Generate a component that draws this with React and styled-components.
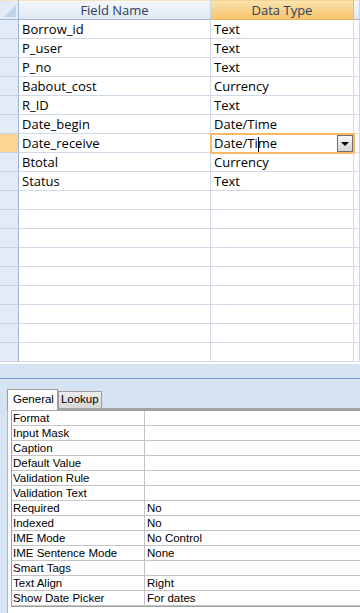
import React from "react";
import styled, { createGlobalStyle } from "styled-components";

const Global = createGlobalStyle`
  html, body { margin: 0; padding: 0; background: #ffffff; }
  body { width: 360px; height: 613px; overflow: hidden; }
  * { box-sizing: border-box; }
`;

const Page = styled.div`
  width: 360px;
  height: 613px;
  display: flex;
  flex-direction: column;
  font-family: "Open Sans", "Liberation Sans", sans-serif;
  background: #ffffff;
`;

const Grid = styled.div`
  height: 364px;
  flex: none;
  display: flex;
  flex-direction: column;
  background: #ffffff;
`;

const Row = styled.div`
  display: grid;
  grid-template-columns: 19px 192px 143px 1fr;
  height: ${(p) => (p.$header ? "20px" : "19px")};
  flex: none;
`;

const Corner = styled.div`
  position: relative;
  background: #e3ebf6;
  border-top: 1px solid #f2e4c2;
  border-right: 1px solid #9fb6d3;
  border-bottom: 1px solid #9fb6d3;
  &::after {
    content: "";
    position: absolute;
    right: 2px;
    bottom: 2px;
    width: 0;
    height: 0;
    border-left: 12px solid transparent;
    border-bottom: 12px solid #c3d2e7;
  }
`;

const HeadCell = styled.div`
  background: ${(p) =>
    p.$active
      ? "linear-gradient(#fae3ad, #f7c46c)"
      : "linear-gradient(#f4f7fb, #dfe8f4)"};
  border-top: 1px solid ${(p) => (p.$active ? "#f4d594" : "#f2e4c2")};
  border-right: 1px solid ${(p) => (p.$active ? "#e9bb6e" : "#c9d5e6")};
  border-bottom: 1px solid ${(p) => (p.$active ? "#e7b460" : "#9fb6d3")};
  color: #2b3e5c;
  font-size: 13px;
  line-height: 18px;
  text-align: center;
  white-space: nowrap;
  overflow: hidden;
`;

const Selector = styled.div`
  background: ${(p) => (p.$active ? "#fcd494" : "#e3ebf6")};
  border-right: 1px solid #9fb6d3;
  border-bottom: 1px solid #c6d3e6;
`;

const Cell = styled.div`
  position: relative;
  display: flex;
  align-items: center;
  justify-content: space-between;
  padding-left: 3px;
  border-right: 1px solid #d1d9e6;
  border-bottom: 1px solid #d1d9e6;
  font-size: 13px;
  color: #000000;
  white-space: nowrap;
  ${(p) =>
    p.$focus &&
    `
    &::after {
      content: "";
      position: absolute;
      left: -1px;
      top: -1px;
      right: -2px;
      bottom: -2px;
      border: 2px solid #f7b967;
      pointer-events: none;
    }
  `}
`;

const Caret = styled.span`
  display: inline-block;
  width: 1px;
  height: 15px;
  background: #000000;
  vertical-align: middle;
  margin-right: -1px;
`;

const DropButton = styled.div`
  width: 16px;
  height: 17px;
  margin-top: 1px;
  border: 1px solid #707070;
  background: linear-gradient(#f6f6f6, #d6d6d6);
  display: flex;
  align-items: center;
  justify-content: center;
  &::before {
    content: "";
    width: 0;
    height: 0;
    border-left: 4px solid transparent;
    border-right: 4px solid transparent;
    border-top: 4px solid #000000;
  }
`;

const Splitter = styled.div`
  height: 15px;
  flex: none;
  background: #d5e3f3;
  border-bottom: 1px solid #6e9bd3;
`;

const PropsPane = styled.div`
  flex: 1;
  background: #d5e3f3;
  padding: 10px 0 0 7px;
  display: flex;
  flex-direction: column;
`;

const TabStrip = styled.div`
  display: flex;
  align-items: flex-end;
  height: 21px;
  flex: none;
  border-bottom: 2px solid #a2a2a2;
  font-family: "Liberation Sans", Arial, sans-serif;
  font-size: 11.5px;
`;

const Tab = styled.div`
  height: ${(p) => (p.$active ? "21px" : "17px")};
  margin-bottom: ${(p) => (p.$active ? "-2px" : "0")};
  padding: ${(p) => (p.$active ? "3px 3px 0 5px" : "1px 2px 0 2px")};
  background: ${(p) => (p.$active ? "#ffffff" : "linear-gradient(#ececec, #d8d8d8)")};
  border: 1px solid #9c9c9c;
  border-bottom: none;
  color: #000000;
  position: relative;
  z-index: ${(p) => (p.$active ? 1 : 0)};
`;

const TabPanel = styled.div`
  flex: 1;
  background: #ffffff;
  border-left: 1px solid #a9b9cc;
  padding: 0 0 0 3px;
`;

const PropTable = styled.div`
  border: 1px solid #a0a0a0;
  border-right: none;
  display: grid;
  grid-template-columns: 133px 1fr;
  font-family: "Liberation Sans", Arial, sans-serif;
  font-size: 11.5px;
  color: #000000;
`;

const PropCell = styled.div`
  height: 15px;
  line-height: 14px;
  padding-left: ${(p) => (p.$value ? "2px" : "1px")};
  border-bottom: 1px solid #c4c4c4;
  border-right: ${(p) => (p.$value ? "none" : "1px solid #c4c4c4")};
  white-space: nowrap;
  overflow: hidden;
`;

const fields = [
  ["Borrow_id", "Text"],
  ["P_user", "Text"],
  ["P_no", "Text"],
  ["Babout_cost", "Currency"],
  ["R_ID", "Text"],
  ["Date_begin", "Date/Time"],
  ["Date_receive", "Date/Time", true],
  ["Btotal", "Currency"],
  ["Status", "Text"],
];

const props = [
  ["Format", ""],
  ["Input Mask", ""],
  ["Caption", ""],
  ["Default Value", ""],
  ["Validation Rule", ""],
  ["Validation Text", ""],
  ["Required", "No"],
  ["Indexed", "No"],
  ["IME Mode", "No Control"],
  ["IME Sentence Mode", "None"],
  ["Smart Tags", ""],
  ["Text Align", "Right"],
  ["Show Date Picker", "For dates"],
];

export default function App() {
  const rows = [...fields];
  while (rows.length < 18) rows.push(["", ""]);
  return (
    <Page>
      <Global />
      <Grid>
        <Row $header>
          <Corner />
          <HeadCell>Field Name</HeadCell>
          <HeadCell $active>Data Type</HeadCell>
          <HeadCell />
        </Row>
        {rows.map(([name, type, active], i) => (
          <Row key={i}>
            <Selector $active={active} />
            <Cell>{name}</Cell>
            <Cell $focus={active}>
              {active ? (
                <>
                  <span>
                    Date/Ti
                    <Caret />
                    me
                  </span>
                  <DropButton />
                </>
              ) : (
                type
              )}
            </Cell>
            <Cell />
          </Row>
        ))}
      </Grid>
      <Splitter />
      <PropsPane>
        <TabStrip>
          <Tab $active>General</Tab>
          <Tab>Lookup</Tab>
        </TabStrip>
        <TabPanel>
          <PropTable>
            {props.map(([k, v]) => (
              <React.Fragment key={k}>
                <PropCell>{k}</PropCell>
                <PropCell $value>{v}</PropCell>
              </React.Fragment>
            ))}
          </PropTable>
        </TabPanel>
      </PropsPane>
    </Page>
  );
}
